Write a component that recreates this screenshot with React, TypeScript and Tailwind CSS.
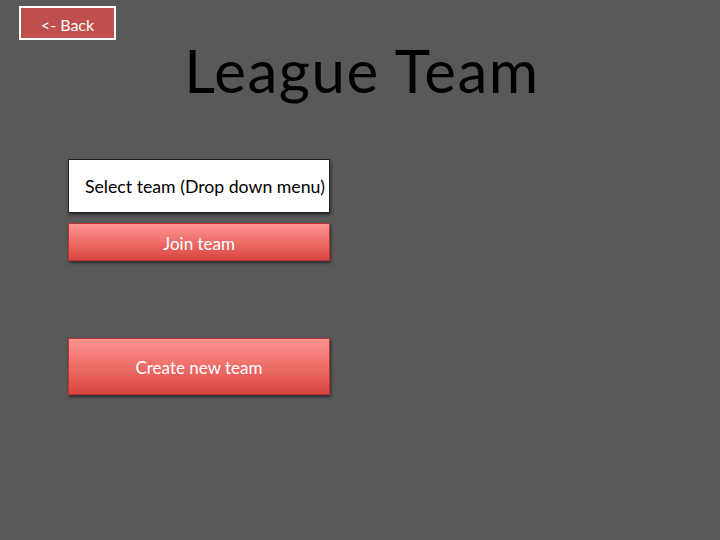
export default function App() {
  return (
    <div className="w-[720px] h-[540px] bg-[#595959] relative overflow-hidden" style={{ fontFamily: "Lato, 'Open Sans', sans-serif" }}>
      <div className="absolute left-[19px] top-[6px] w-[97px] h-[34px] border-2 border-white bg-[#c0504d] flex items-center justify-center pt-[3px] text-white text-[16px]">
        &lt;- Back
      </div>
      <div className="pt-[32px] flex justify-center">
        <h1 className="text-black text-[60px] leading-[76px] tracking-[1.5px] ml-[4px]">League Team</h1>
      </div>
      <div className="ml-[68px] mt-[51px] w-[262px] flex flex-col">
        <div className="h-[54px] bg-white border border-[#222] flex items-center justify-center pl-[12px] pt-[2px] text-black text-[17.7px] shadow-[1px_2px_3px_rgba(0,0,0,0.5)]">
          Select team (Drop down menu)
        </div>
        <div className="mt-[10px] h-[38px] bg-gradient-to-b from-[#ff9491] to-[#d9433f] border border-[#b33] flex items-center justify-center pt-[3px] text-white text-[17px] shadow-[1px_2px_3px_rgba(0,0,0,0.5)]">
          Join team
        </div>
        <div className="mt-[77px] h-[57px] bg-gradient-to-b from-[#ff9491] to-[#d9433f] border border-[#b33] flex items-center justify-center pt-[3px] text-white text-[17px] shadow-[1px_2px_3px_rgba(0,0,0,0.5)]">
          Create new team
        </div>
      </div>
    </div>
  );
}
